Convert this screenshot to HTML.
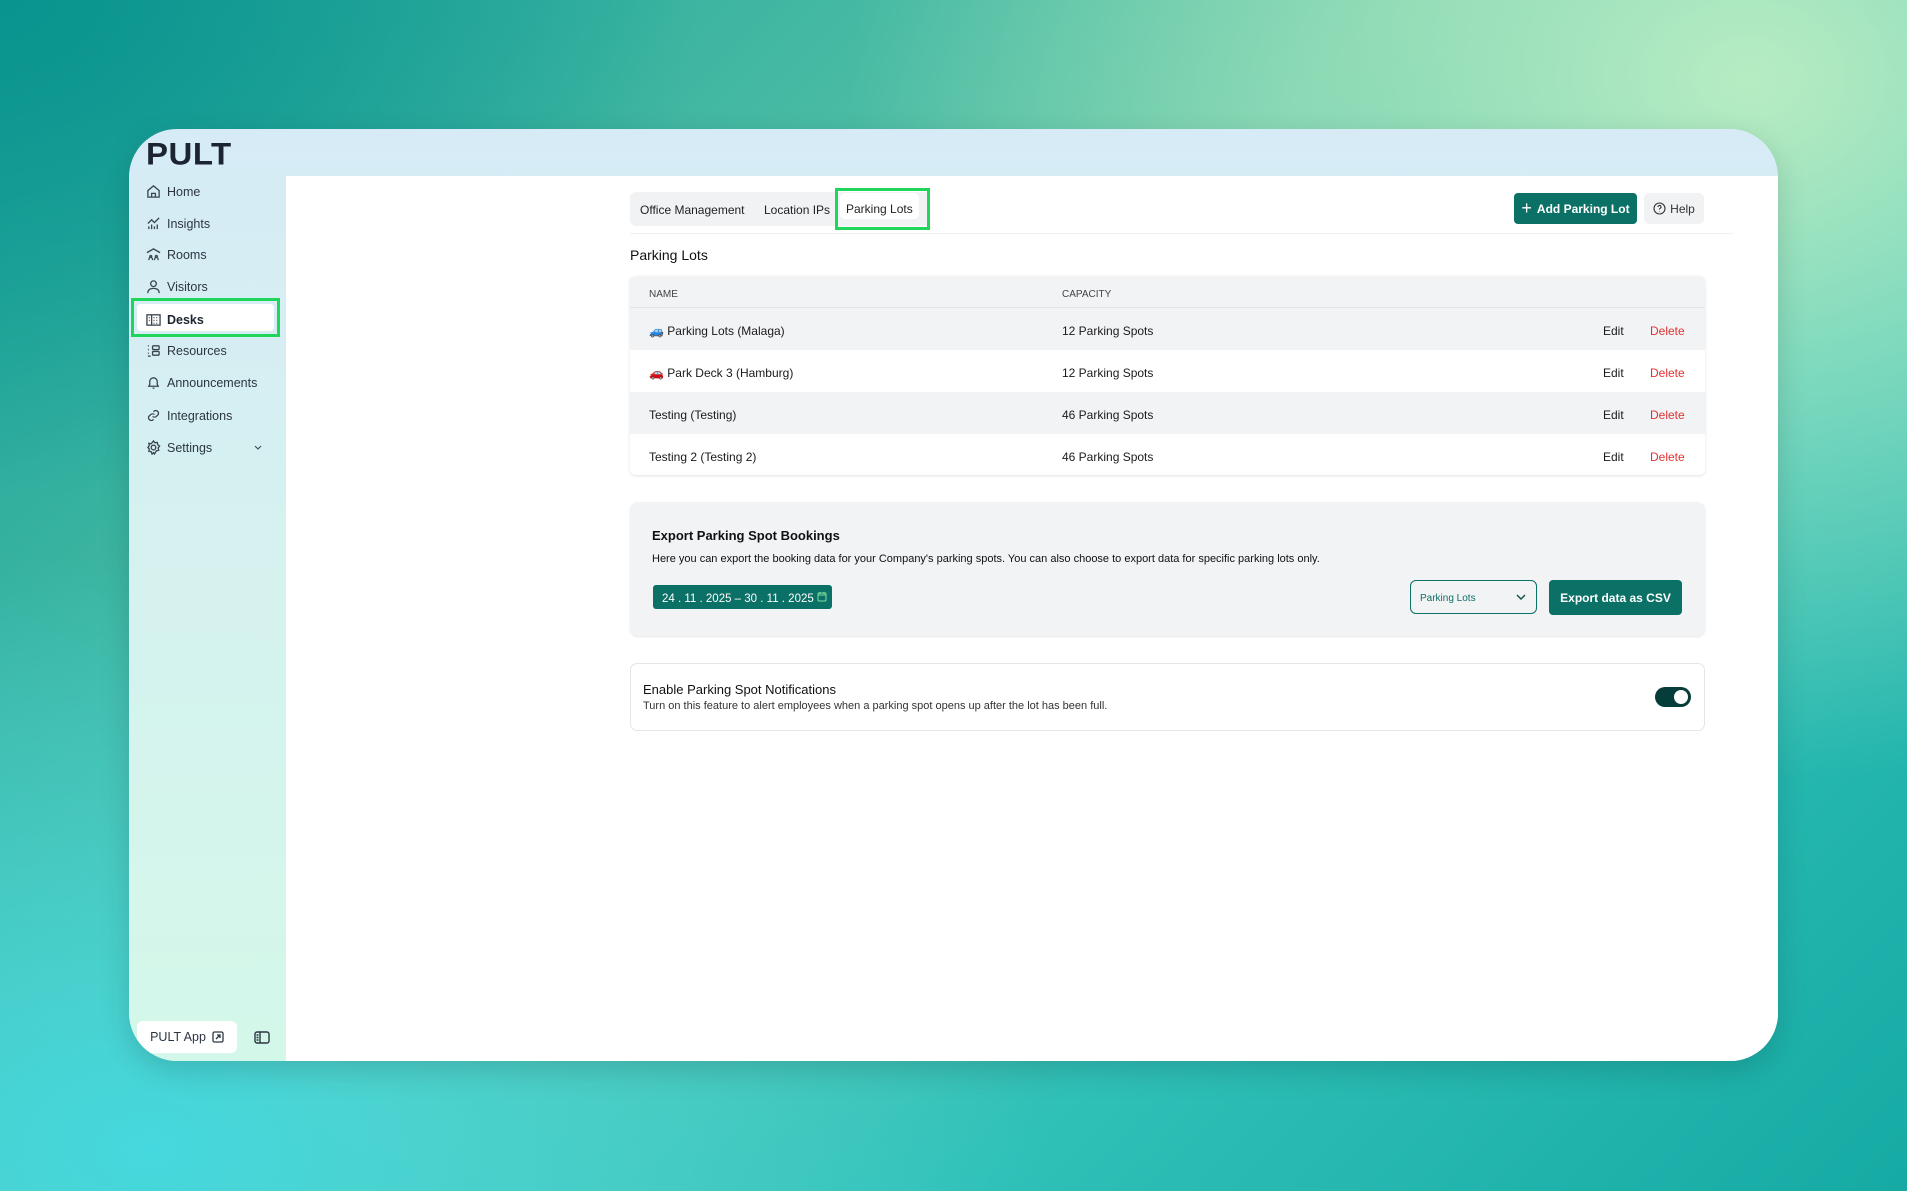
<!DOCTYPE html>
<html><head><meta charset="utf-8"><style>
*{box-sizing:border-box;margin:0;padding:0}
body{width:1907px;height:1191px;overflow:hidden;font-family:"Liberation Sans",sans-serif;color:#1f2933;position:relative;
background:
radial-gradient(ellipse 900px 700px at 1750px 80px,#b8ecc2 0%,rgba(184,236,194,0) 100%),
radial-gradient(ellipse 900px 600px at 150px 1150px,#45d8de 0%,rgba(69,216,222,0) 100%),
radial-gradient(ellipse 700px 500px at 0px 0px,#0a948f 0%,rgba(10,148,143,0) 100%),
linear-gradient(135deg,#1aa39a 0%,#5fc6a8 45%,#2fc0b8 70%,#16aaa4 100%);}
.win{position:absolute;left:129px;top:129px;width:1649px;height:932px;border-radius:48px;overflow:hidden;
background:linear-gradient(180deg,#d6ebf6 0%,#d5f2ef 50%,#d3f8e9 100%);box-shadow:0 10px 30px rgba(0,0,0,.15)}
.logo{position:absolute;left:17px;top:6px;font-size:33px;font-weight:900;color:#1b2430;letter-spacing:0.5px;transform:scaleY(0.95)}
.nav{position:absolute;left:17px;font-size:12.5px;color:#2c3642;display:flex;align-items:center;gap:6px}
.nav svg{width:15px;height:15px;stroke:#3a4450;fill:none;stroke-width:1.4}
.desks{position:absolute;left:2px;top:169px;width:149px;height:39px;border:3px solid #1fd65b;}
.desks div{position:absolute;left:3px;top:3px;right:3px;bottom:3px;background:#fff;border-radius:4px}
.main{position:absolute;left:157px;top:47px;right:0;bottom:0;background:#fff}
.tabs{position:absolute;left:344px;top:16px;height:34px;width:300px;background:#f1f2f4;border-radius:6px}
.tab{position:absolute;top:12px;font-size:12px;color:#222}
.green{position:absolute;left:549px;top:12px;width:95px;height:42px;border:3px solid #1fd65b}
.green div{position:absolute;left:2px;top:2px;right:8px;bottom:8px;background:#fff;border-radius:5px}
.hr{position:absolute;left:344px;top:57px;width:1103px;height:1px;background:#eef0f2}
.btn{position:absolute;background:#0b7065;color:#fff;font-weight:bold;font-size:12px;border-radius:4px;display:flex;align-items:center;justify-content:center}
.help{position:absolute;left:1358px;top:17px;width:60px;height:31px;background:#f1f2f4;border-radius:5px;font-size:12px;color:#333;display:flex;align-items:center;justify-content:center;gap:4px}
h2{position:absolute;left:344px;top:71px;font-size:14px;font-weight:normal;color:#111}
.table{position:absolute;left:344px;top:100px;width:1075px;height:199px;border-radius:6px;overflow:hidden;box-shadow:0 1px 3px rgba(0,0,0,.12)}
.row{position:absolute;left:0;width:100%;height:42px;font-size:12px;color:#1a1a1a}
.row span{position:absolute;top:16px}
.export{position:absolute;left:344px;top:326px;width:1075px;height:134px;background:#f2f3f5;border-radius:8px;box-shadow:0 1px 2px rgba(0,0,0,.1)}
.notif{position:absolute;left:344px;top:487px;width:1075px;height:68px;border:1px solid #e3e5e8;border-radius:7px;background:#fff}
</style></head><body>
<div class="win">
<div class="logo">PULT</div>
<div class="desks"><div></div></div>
<div class="nav" style="top:55px"><svg viewBox="0 0 16 16"><path d="M2 7l6-5 6 5v7H2z M6 14v-4h4v4"/></svg>Home</div>
<div class="nav" style="top:87px"><svg viewBox="0 0 16 16"><path d="M2 8l4-4 3 3 5-5 M3 14v-3 M6 14v-5 M9 14v-3 M12 14v-5"/></svg>Insights</div>
<div class="nav" style="top:118px"><svg viewBox="0 0 16 16"><path d="M1 6l7-4 7 4 M5 9a1 1 0 1 0 .1 0 M11 9a1 1 0 1 0 .1 0 M3 14c0-2 1-3 2-3s2 1 2 3 M9 14c0-2 1-3 2-3s2 1 2 3"/></svg>Rooms</div>
<div class="nav" style="top:150px"><svg viewBox="0 0 16 16"><circle cx="8" cy="5" r="3"/><path d="M2 15c0-4 3-5 6-5s6 1 6 5"/></svg>Visitors</div>
<div class="nav" style="top:183px;font-weight:bold;color:#1b2430"><svg viewBox="0 0 16 16"><rect x="1" y="3" width="14" height="11"/><path d="M6 3v11 M3 6h1 M3 9h1 M8 6h1 M11 6h1 M8 9h1 M11 9h1 M8 12h1 M11 12h1"/></svg>Desks</div>
<div class="nav" style="top:214px"><svg viewBox="0 0 16 16"><path d="M2 3h1 M2 7h1 M2 11h1 M2 14h3"/><rect x="7" y="3" width="7" height="4" rx="1"/><rect x="7" y="9" width="7" height="4" rx="1"/></svg>Resources</div>
<div class="nav" style="top:246px"><svg viewBox="0 0 16 16"><path d="M3 12h10l-1-2V7a4 4 0 0 0-8 0v3z M7 14h2"/></svg>Announcements</div>
<div class="nav" style="top:279px"><svg viewBox="0 0 16 16"><path d="M7 9a3 3 0 0 0 4 0l2-2a3 3 0 0 0-4-4l-1 1 M9 7a3 3 0 0 0-4 0l-2 2a3 3 0 0 0 4 4l1-1"/></svg>Integrations</div>
<div class="nav" style="top:311px"><svg viewBox="0 0 16 16"><circle cx="8" cy="8" r="2.5"/><path d="M8 1l1.5 2 2.5-.5.5 2.5 2 1.5-1.5 2 .5 2.5-2.5.5L9 15 8 13.5 6.5 15l-1-2.5-2.5-.5.5-2.5L2 8l1.5-2-.5-2.5 2.5.5z"/></svg>Settings<svg viewBox="0 0 16 16" style="position:absolute;left:106px;width:12px"><path d="M4 6l4 4 4-4"/></svg></div>
<div style="position:absolute;left:8px;top:892px;width:100px;height:32px;background:#fff;border-radius:6px;font-size:12.5px;color:#2c3642;display:flex;align-items:center;justify-content:center;gap:6px">PULT App <svg width="12" height="12" viewBox="0 0 12 12" fill="none" stroke="#2c3642" stroke-width="1.3"><rect x="1" y="1" width="10" height="10" rx="1.5"/><path d="M4 8l4-4 M5 4h3v3"/></svg></div>
<svg style="position:absolute;left:125px;top:902px" width="16" height="13" viewBox="0 0 16 13" fill="none" stroke="#2c3642" stroke-width="1.4"><rect x="1" y="1" width="14" height="11" rx="2"/><path d="M6 1v11 M2.5 4h2 M2.5 6.5h2 M2.5 9h2"/></svg>
<div class="main">
<div class="tabs"></div>
<div class="green"><div></div></div>
<div class="tab" style="left:354px;top:27px">Office Management</div>
<div class="tab" style="left:478px;top:27px">Location IPs</div>
<div class="tab" style="left:560px;top:26px">Parking Lots</div>
<div class="hr"></div>
<div class="btn" style="left:1228px;top:17px;width:123px;height:31px"><span style="font-size:18px;font-weight:normal;margin-right:5px">+</span>Add Parking Lot</div>
<div class="help"><svg width="13" height="13" viewBox="0 0 13 13" fill="none" stroke="#333" stroke-width="1.1"><circle cx="6.5" cy="6.5" r="5.5"/><path d="M5 5a1.5 1.5 0 1 1 2 1.4c-.5.2-.5.6-.5 1.1 M6.5 9.3v.3"/></svg>Help</div>
<h2>Parking Lots</h2>
<div class="table">
<div class="row" style="top:0;height:32px;background:#f2f3f5;border-bottom:1px solid #e2e4e7;font-size:10px;color:#444"><span style="left:19px;top:13px">NAME</span><span style="left:432px;top:13px">CAPACITY</span></div>
<div class="row" style="top:32px;background:#f2f3f5"><span style="left:19px">🚙 Parking Lots (Malaga)</span><span style="left:432px">12 Parking Spots</span><span style="left:973px">Edit</span><span style="left:1020px;color:#e03131">Delete</span></div>
<div class="row" style="top:74px;background:#fff"><span style="left:19px">🚗 Park Deck 3 (Hamburg)</span><span style="left:432px">12 Parking Spots</span><span style="left:973px">Edit</span><span style="left:1020px;color:#e03131">Delete</span></div>
<div class="row" style="top:116px;background:#f2f3f5"><span style="left:19px">Testing (Testing)</span><span style="left:432px">46 Parking Spots</span><span style="left:973px">Edit</span><span style="left:1020px;color:#e03131">Delete</span></div>
<div class="row" style="top:158px;background:#fff"><span style="left:19px">Testing 2 (Testing 2)</span><span style="left:432px">46 Parking Spots</span><span style="left:973px">Edit</span><span style="left:1020px;color:#e03131">Delete</span></div>
</div>
<div class="export">
<div style="position:absolute;left:22px;top:26px;font-size:13px;font-weight:bold;color:#111">Export Parking Spot Bookings</div>
<div style="position:absolute;left:22px;top:51px;font-size:11px;color:#111">Here you can export the booking data for your Company's parking spots. You can also choose to export data for specific parking lots only.</div>
<div style="position:absolute;left:23px;top:83px;width:179px;height:24px;background:#0b7065;border-radius:3px;color:#fff;font-size:11.5px;padding:6px 0 0 9px;white-space:nowrap">24 . 11 . 2025 – 30 . 11 . 2025 <svg width="10" height="11" viewBox="0 0 10 11" fill="none" stroke="#7fe0a0" stroke-width="1"><rect x="1" y="2" width="8" height="8" rx="1"/><path d="M3 1v2 M7 1v2 M1 4h8"/></svg></div>
<div style="position:absolute;left:780px;top:78px;width:127px;height:34px;border:1px solid #0b7065;border-radius:6px;font-size:10px;color:#0b7065;padding:12px 0 0 9px">Parking Lots<svg style="position:absolute;right:10px;top:12px" width="10" height="8" viewBox="0 0 10 8" fill="none" stroke="#0b4f48" stroke-width="1.4"><path d="M1 2l4 4 4-4"/></svg></div>
<div class="btn" style="left:919px;top:78px;width:133px;height:35px;font-weight:bold;font-size:12px">Export data as CSV</div>
</div>
<div class="notif">
<div style="position:absolute;left:12px;top:18px;font-size:13px;color:#111">Enable Parking Spot Notifications</div>
<div style="position:absolute;left:12px;top:36px;font-size:11px;color:#333">Turn on this feature to alert employees when a parking spot opens up after the lot has been full.</div>
<div style="position:absolute;left:1024px;top:23px;width:36px;height:20px;background:#053d3a;border-radius:10px"><div style="position:absolute;right:3px;top:3px;width:14px;height:14px;border-radius:50%;background:#fff"></div></div>
</div>
</div>
</div>
</body></html>
